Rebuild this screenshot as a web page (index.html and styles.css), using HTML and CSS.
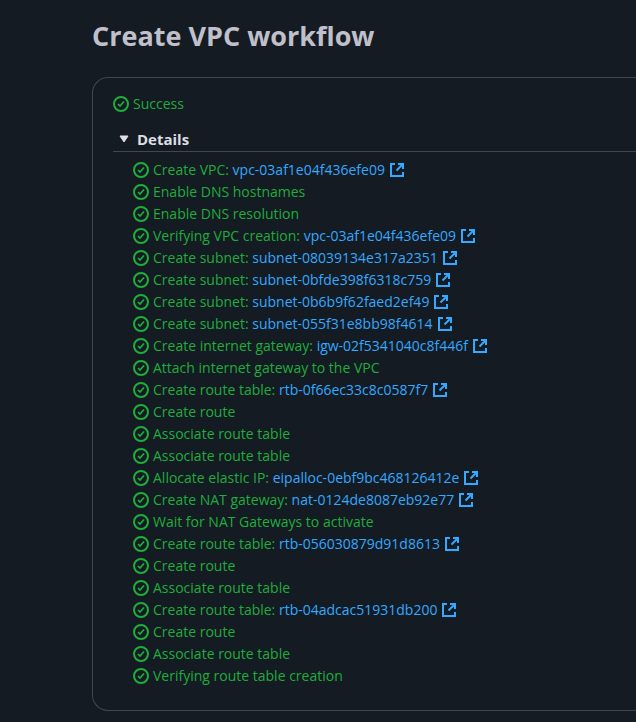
FILE: index.html
```html
<!DOCTYPE html>
<html lang="en">
	<head>
		<meta charset="utf-8">
		<title>Create VPC workflow</title>
		<link rel="stylesheet" href="styles.css">
	</head>
	<body>
		<!-- shared icons -->
		<svg class="sprite" aria-hidden="true">
			<symbol id="ok" viewBox="0 0 16 16">
				<circle cx="8" cy="8" r="7"/>
				<path d="M5 8l2 2 4-4.5" stroke-width="1.7"/>
			</symbol>
			<symbol id="ext" viewBox="0 0 16 16">
				<path d="M6 2H2v12h12v-4"/>
				<path d="M9 2h5v5M7.5 8.5L14 2"/>
			</symbol>
		</svg>
		<main class="page">
			<h1 class="title">Create VPC workflow</h1>
			<section class="card">
				<div class="status"><svg class="icon"><use href="#ok"/></svg><span>Success</span></div>
				<details class="details" open>
					<summary class="summary"><svg class="caret" viewBox="0 0 10 8"><path d="M1 1h8L5 7z"/></svg>Details</summary>
					<ul class="steps">
						<li><svg class="icon"><use href="#ok"/></svg><span>Create VPC: <a href="#">vpc-03af1e04f436efe09</a></span><svg class="icon ext"><use href="#ext"/></svg></li>
						<li><svg class="icon"><use href="#ok"/></svg><span>Enable DNS hostnames</span></li>
						<li><svg class="icon"><use href="#ok"/></svg><span>Enable DNS resolution</span></li>
						<li><svg class="icon"><use href="#ok"/></svg><span>Verifying VPC creation: <a href="#">vpc-03af1e04f436efe09</a></span><svg class="icon ext"><use href="#ext"/></svg></li>
						<li><svg class="icon"><use href="#ok"/></svg><span>Create subnet: <a href="#">subnet-08039134e317a2351</a></span><svg class="icon ext"><use href="#ext"/></svg></li>
						<li><svg class="icon"><use href="#ok"/></svg><span>Create subnet: <a href="#">subnet-0bfde398f6318c759</a></span><svg class="icon ext"><use href="#ext"/></svg></li>
						<li><svg class="icon"><use href="#ok"/></svg><span>Create subnet: <a href="#">subnet-0b6b9f62faed2ef49</a></span><svg class="icon ext"><use href="#ext"/></svg></li>
						<li><svg class="icon"><use href="#ok"/></svg><span>Create subnet: <a href="#">subnet-055f31e8bb98f4614</a></span><svg class="icon ext"><use href="#ext"/></svg></li>
						<li><svg class="icon"><use href="#ok"/></svg><span>Create internet gateway: <a href="#">igw-02f5341040c8f446f</a></span><svg class="icon ext"><use href="#ext"/></svg></li>
						<li><svg class="icon"><use href="#ok"/></svg><span>Attach internet gateway to the VPC</span></li>
						<li><svg class="icon"><use href="#ok"/></svg><span>Create route table: <a href="#">rtb-0f66ec33c8c0587f7</a></span><svg class="icon ext"><use href="#ext"/></svg></li>
						<li><svg class="icon"><use href="#ok"/></svg><span>Create route</span></li>
						<li><svg class="icon"><use href="#ok"/></svg><span>Associate route table</span></li>
						<li><svg class="icon"><use href="#ok"/></svg><span>Associate route table</span></li>
						<li><svg class="icon"><use href="#ok"/></svg><span>Allocate elastic IP: <a href="#">eipalloc-0ebf9bc468126412e</a></span><svg class="icon ext"><use href="#ext"/></svg></li>
						<li><svg class="icon"><use href="#ok"/></svg><span>Create NAT gateway: <a href="#">nat-0124de8087eb92e77</a></span><svg class="icon ext"><use href="#ext"/></svg></li>
						<li><svg class="icon"><use href="#ok"/></svg><span>Wait for NAT Gateways to activate</span></li>
						<li><svg class="icon"><use href="#ok"/></svg><span>Create route table: <a href="#">rtb-056030879d91d8613</a></span><svg class="icon ext"><use href="#ext"/></svg></li>
						<li><svg class="icon"><use href="#ok"/></svg><span>Create route</span></li>
						<li><svg class="icon"><use href="#ok"/></svg><span>Associate route table</span></li>
						<li><svg class="icon"><use href="#ok"/></svg><span>Create route table: <a href="#">rtb-04adcac51931db200</a></span><svg class="icon ext"><use href="#ext"/></svg></li>
						<li><svg class="icon"><use href="#ok"/></svg><span>Create route</span></li>
						<li><svg class="icon"><use href="#ok"/></svg><span>Associate route table</span></li>
						<li><svg class="icon"><use href="#ok"/></svg><span>Verifying route table creation</span></li>
					</ul>
				</details>
			</section>
		</main>
	</body>
</html>
```

FILE: styles.css
```css
*{
	margin: 0;
	padding: 0;
	box-sizing: border-box;
}
body{
	background-color: #151b23;
	color: #dedee3;
	font-family: "Open Sans", "Noto Sans", sans-serif;
	font-size: 14px;
	line-height: 22px;
}
.sprite{
	display: none;
}
.page{
	padding: 18px 0 11px 92px;
}
.title{
	font-size: 27px;
	line-height: 36px;
	font-weight: 700;
	color: #c0c0ca;
	margin-bottom: 23px;
}
/* the card runs on to the right edge */
.card{
	border: 1px solid #424650;
	border-right: 0;
	border-radius: 16px 0 0 16px;
	padding: 15px 0 23px 20px;
}
.status{
	display: flex;
	align-items: center;
	gap: 4px;
	color: #1fad3b;
	margin-bottom: 12px;
}
.icon{
	flex: none;
	width: 16px;
	height: 16px;
	fill: none;
	stroke: #1fad3b;
	stroke-width: 2;
}
.summary{
	display: flex;
	align-items: center;
	gap: 8px;
	padding-left: 6px;
	border-bottom: 1px solid #424650;
	font-size: 15px;
	line-height: 24px;
	font-weight: 700;
	cursor: pointer;
}
.caret{
	width: 10px;
	height: 8px;
	fill: #dedee3;
	stroke: #dedee3;
	stroke-width: 1;
	stroke-linejoin: round;
}
.steps{
	list-style: none;
	padding: 7px 0 0 20px;
}
.steps li{
	display: flex;
	align-items: center;
	gap: 4px;
	color: #1fad3b;
}
.steps a{
	color: #33a9ff;
	font-weight: 500;
	text-decoration: none;
}
.steps a:hover{
	text-decoration: underline;
}
.icon.ext{
	stroke: #33a9ff;
}
```
